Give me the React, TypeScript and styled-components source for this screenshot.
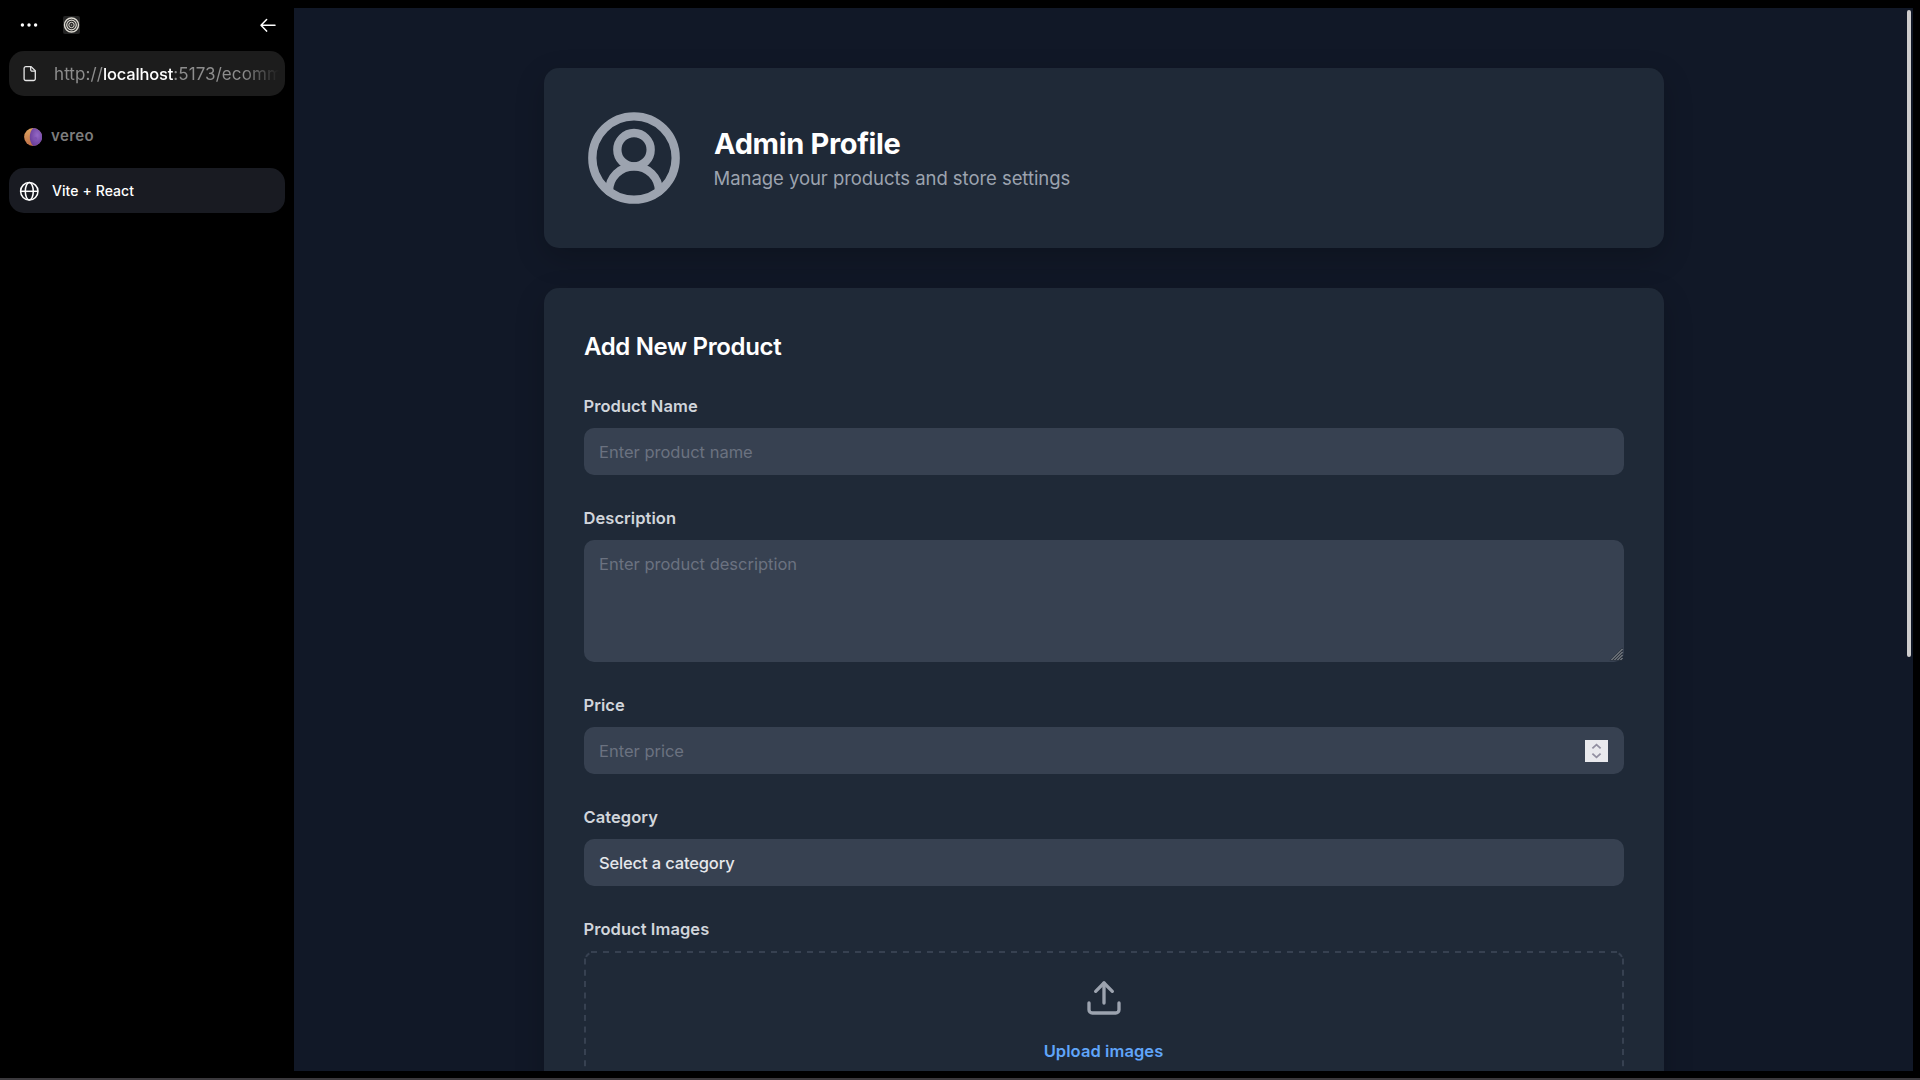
import React from "react";
import styled, { createGlobalStyle } from "styled-components";

const GlobalStyle = createGlobalStyle`
  *, *::before, *::after { box-sizing: border-box; }
  html, body { margin: 0; padding: 0; background: #000; overflow: hidden; }
  body, input, textarea, button { font-family: Inter, "Liberation Sans", sans-serif; }
`;

const Shell = styled.div`
  display: flex;
  width: 100vw;
  height: 100vh;
  padding-top: 8px;
  padding-right: 7px;
  background: #000;
  border-bottom: 2px solid #3b393d;
  overflow: hidden;
`;

const Sidebar = styled.aside`
  display: flex;
  flex-direction: column;
  flex: none;
  width: 294px;
  padding: 0 9px;
`;

const Toolbar = styled.header`
  display: flex;
  align-items: center;
  height: 34px;
  margin-bottom: 9px;
  padding: 0 9px 0 11px;

  svg { display: block; }
`;

const Spacer = styled.div`
  flex: 1;
`;

const Emblem = styled.div`
  display: flex;
  margin-left: 25px;
`;

const AddressBar = styled.div`
  display: flex;
  align-items: center;
  height: 45px;
  padding: 0 6px 0 14px;
  gap: 17px;
  border-radius: 15px;
  background: #1c1c1c;

  svg { flex: none; }
`;

const Address = styled.div`
  flex: 1;
  min-width: 0;
  overflow: hidden;
  white-space: nowrap;
  font-size: 17px;
  line-height: 24px;
  letter-spacing: 0.08px;
  color: #8d8d8d;
  mask-image: linear-gradient(to right, #000 84%, transparent 100%);
`;

const Host = styled.span`
  font-size: 16.5px;
  font-weight: 500;
  letter-spacing: -0.15px;
  color: #fff;
`;

const TabList = styled.nav`
  display: flex;
  flex-direction: column;
  gap: 9px;
  margin-top: 18px;
`;

const Tab = styled.div<{ $active?: boolean }>`
  display: flex;
  align-items: center;
  height: 45px;
  padding-left: ${(p) => (p.$active ? 10 : 15)}px;
  gap: ${(p) => (p.$active ? 13 : 9)}px;
  border-radius: 15px;
  background: ${(p) => (p.$active ? "#191b22" : "transparent")};
  color: ${(p) => (p.$active ? "#fff" : "#7d7d7d")};
  font-size: ${(p) => (p.$active ? 14 : 15)}px;
  font-weight: ${(p) => (p.$active ? 500 : 600)};
  letter-spacing: ${(p) => (p.$active ? 0.08 : 0.4)}px;
  line-height: 20px;
`;

const TabTitle = styled.span<{ $raised?: boolean }>`
  padding-bottom: ${(p) => (p.$raised ? 2 : 0)}px;
`;

const Viewport = styled.main`
  position: relative;
  flex: 1;
  height: 1063px;
  overflow: hidden;
  background: #111827;
`;

const ScrollThumb = styled.div`
  position: absolute;
  top: 2px;
  right: 2px;
  width: 4px;
  height: 647px;
  border-radius: 2px;
  background: #cfcdcd;
`;

const Page = styled.div`
  display: flex;
  flex-direction: column;
  gap: 40px;
  width: 1120px;
  margin-left: 250px;
  padding-top: 60px;
`;

const Card = styled.section`
  padding: 40px;
  border-radius: 15px;
  background: #1f2937;
  box-shadow: 0 10px 30px rgba(0, 0, 0, 0.2);
`;

const ProfileCard = styled(Card)`
  display: flex;
  align-items: center;
  gap: 30px;
`;

const ProfileText = styled.div`
  padding-top: 2px;
`;

const ProfileName = styled.h1`
  margin: 0;
  font-size: 29px;
  font-weight: 700;
  line-height: 40px;
  letter-spacing: -0.34px;
  color: #fff;
`;

const ProfileNote = styled.p`
  margin: -1px 0 1px -0.5px;
  font-size: 18.5px;
  line-height: 30px;
  letter-spacing: -0.05px;
  color: #9ca3af;
`;

const FormTitle = styled.h2`
  margin: 0 0 29px;
  padding-top: 1px;
  font-size: 24px;
  font-weight: 600;
  line-height: 36px;
  letter-spacing: -0.35px;
  color: #fff;
`;

const Form = styled.form`
  display: flex;
  flex-direction: column;
  gap: 31px;
`;

const Field = styled.div`
  display: flex;
  flex-direction: column;
  gap: 10px;
`;

const Label = styled.label`
  margin-left: -0.5px;
  font-size: 16.5px;
  font-weight: 600;
  line-height: 24px;
  letter-spacing: 0.06px;
  color: #d1d5db;
`;

const Control = styled.div`
  display: flex;
  align-items: center;
  height: 47px;
  padding: 0 16px 0 15px;
  border-radius: 10px;
  background: #374151;
`;

const TextInput = styled.input`
  flex: 1;
  min-width: 0;
  padding: 0;
  border: 0;
  outline: 0;
  background: transparent;
  color: #e5e7eb;
  font-size: 16.5px;
  line-height: 24px;

  &::placeholder { color: #6b7280; opacity: 1; }
`;

const TextAreaFrame = styled.div`
  position: relative;
  height: 122px;

  svg {
    position: absolute;
    right: 1px;
    bottom: 1px;
  }
`;

const TextArea = styled.textarea`
  display: block;
  width: 100%;
  height: 100%;
  padding: 12px 15px;
  border: 0;
  outline: 0;
  border-radius: 10px;
  resize: none;
  background: #374151;
  color: #e5e7eb;
  font-size: 16.5px;
  line-height: 24px;

  &::placeholder { color: #6b7280; opacity: 1; }
`;

const Selected = styled.span`
  font-size: 16.5px;
  font-weight: 500;
  line-height: 24px;
  letter-spacing: -0.15px;
  color: #e5e7eb;
`;

const Stepper = styled.span`
  display: flex;
  align-items: center;
  justify-content: center;
  width: 23px;
  height: 22px;
  background: #e9e9ed;
`;

const Dropzone = styled.div`
  position: relative;
  display: flex;
  flex-direction: column;
  align-items: center;
  gap: 21px;
  height: 160px;
  padding-top: 27px;
`;

const DashedFrame = styled.svg`
  position: absolute;
  top: 0;
  left: 0;
`;

const UploadLink = styled.span`
  margin-left: -1px;
  font-size: 16.5px;
  font-weight: 600;
  line-height: 24px;
  letter-spacing: 0.08px;
  color: #60a5fa;
`;

const DotsIcon = () => (
  <svg width="18" height="8" viewBox="0 0 18 8" fill="#fff">
    <circle cx="2.4" cy="4" r="1.7" />
    <circle cx="9" cy="4" r="1.7" />
    <circle cx="15.6" cy="4" r="1.7" />
  </svg>
);

const RingsIcon = () => (
  <svg width="17" height="18" viewBox="0 0 17 18" fill="none">
    <rect width="17" height="18" rx="2" fill="#242424" />
    <g stroke="#dcd9d1">
      <circle cx="8.5" cy="9" r="7" strokeWidth="1.4" />
      <circle cx="8.5" cy="9" r="4.8" strokeWidth="1.2" />
      <circle cx="8.5" cy="9" r="2.7" strokeWidth="1" />
    </g>
    <circle cx="8.5" cy="9" r="0.8" fill="#a5a29a" />
  </svg>
);

const BackIcon = () => (
  <svg width="16" height="14" viewBox="0 0 16 14" fill="none" stroke="#fff" strokeWidth="1.5" strokeLinecap="round" strokeLinejoin="round">
    <path d="M15 7.3H1M6.6 1.5 1 7.3l5.6 5.8" />
  </svg>
);

const FileIcon = () => (
  <svg width="14" height="17" viewBox="0 0 14 17" fill="none" stroke="#e6e6e6" strokeWidth="1.3" strokeLinejoin="round">
    <path d="M2.9 1.6h5.2l4.2 4.2v7.9a1.8 1.8 0 0 1-1.8 1.8H2.9a1.8 1.8 0 0 1-1.8-1.8V3.4a1.8 1.8 0 0 1 1.8-1.8z" />
    <path d="M7.7 1.8v2.9A1.5 1.5 0 0 0 9.2 6.2h3" />
  </svg>
);

const MoonIcon = () => (
  <svg width="18" height="18" viewBox="0 0 18 18">
    <defs>
      <linearGradient id="lit" x1="0" y1="0" x2="0" y2="1">
        <stop offset="0" stopColor="#e0a560" />
        <stop offset="1" stopColor="#bf7048" />
      </linearGradient>
      <radialGradient id="shade" cx="0.6" cy="0.4" r="0.7">
        <stop offset="0" stopColor="#9468c6" />
        <stop offset="1" stopColor="#663a96" />
      </radialGradient>
    </defs>
    <circle cx="9" cy="9" r="8.9" fill="url(#lit)" />
    <path d="M9.3.1A8.9 8.9 0 0 1 9.3 17.9C4.8 14 4.4 4.6 9.3.1z" fill="url(#shade)" />
    <circle cx="11.5" cy="10.5" r="1.6" fill="#7d51b0" />
  </svg>
);

const GlobeIcon = () => (
  <svg width="20" height="20" viewBox="0 0 20 20" fill="none" stroke="#fff" strokeWidth="1.5">
    <circle cx="10.3" cy="10.3" r="8.7" />
    <ellipse cx="10.3" cy="10.3" rx="4" ry="8.7" />
    <path d="M1.6 10.3h17.4" />
  </svg>
);

const ProfileIcon = () => (
  <svg width="100" height="100" viewBox="0 0 24 24" fill="none" stroke="#9ca3af" strokeWidth="2" strokeLinecap="round" strokeLinejoin="round">
    <path d="M18 20a6 6 0 0 0-12 0" />
    <circle cx="12" cy="10" r="4" />
    <circle cx="12" cy="12" r="10" />
  </svg>
);

const GripIcon = () => (
  <svg width="14" height="14" viewBox="0 0 14 14" fill="none">
    <path d="M.5 13.5 13.5.5v13z" fill="#2b323d" />
    <path d="M2.5 13 13.5 2M5.5 13l8-8M8.5 13l5-5M11.5 13l2-2" stroke="#9ea2a8" strokeWidth="1" />
  </svg>
);

const StepperIcon = () => (
  <svg width="11" height="16" viewBox="0 0 11 16" fill="none" stroke="#918ea0" strokeWidth="1.8">
    <path d="M1.4 5.4 5.5 1.7l4.1 3.7M1.4 10.6l4.1 3.7 4.1-3.7" />
  </svg>
);

const UploadIcon = () => (
  <svg width="40" height="40" viewBox="0 0 24 24" fill="none" stroke="#9ca3af" strokeWidth="2" strokeLinecap="round" strokeLinejoin="round">
    <path d="M21 15v4a2 2 0 0 1-2 2H5a2 2 0 0 1-2-2v-4" />
    <path d="M17 8l-5-5-5 5" />
    <path d="M12 3v12" />
  </svg>
);

const DropzoneBorder = () => (
  <DashedFrame width="1040" height="160" viewBox="0 0 1040 160" fill="none" stroke="#374151" strokeWidth="2">
    <path d="M7 1h1026" strokeDasharray="6 6" />
    <path d="M2 5.9A9 9 0 0 1 5.3 2.3M1038 5.9a9 9 0 0 0-3.3-3.6" />
    <path d="M1 7.4V160M1039 7.4V160" strokeDasharray="6 5.33" />
  </DashedFrame>
);

export default function App() {
  return (
    <>
      <GlobalStyle />
      <Shell>
        <Sidebar>
          <Toolbar>
            <DotsIcon />
            <Emblem>
              <RingsIcon />
            </Emblem>
            <Spacer />
            <BackIcon />
          </Toolbar>
          <AddressBar>
            <FileIcon />
            <Address>
              http://<Host>localhost</Host>:5173/ecomm
            </Address>
          </AddressBar>
          <TabList>
            <Tab>
              <MoonIcon />
              <TabTitle $raised>vereo</TabTitle>
            </Tab>
            <Tab $active>
              <GlobeIcon />
              <TabTitle>Vite + React</TabTitle>
            </Tab>
          </TabList>
        </Sidebar>
        <Viewport>
          <Page>
            <ProfileCard>
              <ProfileIcon />
              <ProfileText>
                <ProfileName>Admin Profile</ProfileName>
                <ProfileNote>Manage your products and store settings</ProfileNote>
              </ProfileText>
            </ProfileCard>
            <Card>
              <FormTitle>Add New Product</FormTitle>
              <Form>
                <Field>
                  <Label>Product Name</Label>
                  <Control>
                    <TextInput placeholder="Enter product name" />
                  </Control>
                </Field>
                <Field>
                  <Label>Description</Label>
                  <TextAreaFrame>
                    <TextArea placeholder="Enter product description" />
                    <GripIcon />
                  </TextAreaFrame>
                </Field>
                <Field>
                  <Label>Price</Label>
                  <Control>
                    <TextInput placeholder="Enter price" inputMode="decimal" />
                    <Stepper>
                      <StepperIcon />
                    </Stepper>
                  </Control>
                </Field>
                <Field>
                  <Label>Category</Label>
                  <Control>
                    <Selected>Select a category</Selected>
                  </Control>
                </Field>
                <Field>
                  <Label>Product Images</Label>
                  <Dropzone>
                    <DropzoneBorder />
                    <UploadIcon />
                    <UploadLink>Upload images</UploadLink>
                  </Dropzone>
                </Field>
              </Form>
            </Card>
          </Page>
          <ScrollThumb />
        </Viewport>
      </Shell>
    </>
  );
}
